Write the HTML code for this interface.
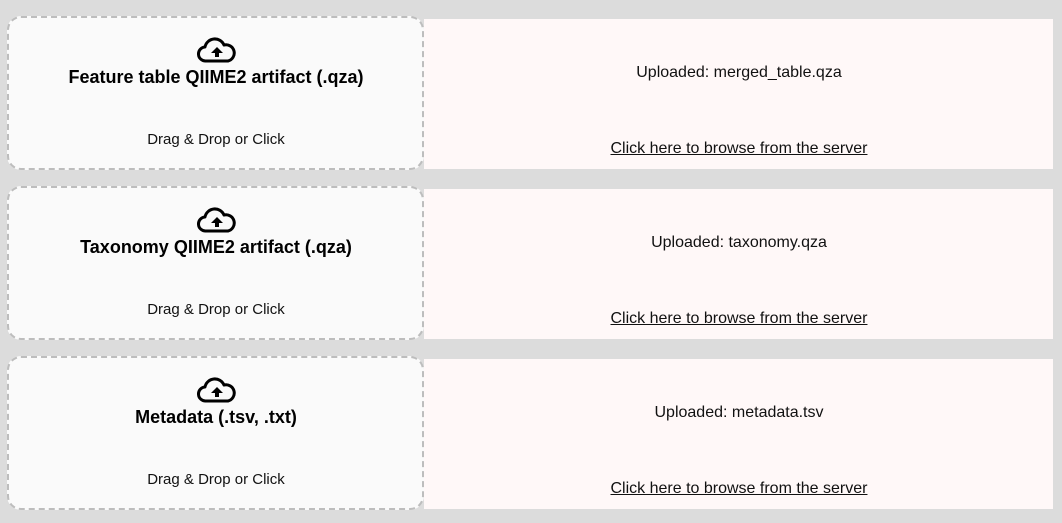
<!DOCTYPE html>
<html><head><style>
body{margin:0;width:1062px;height:523px;background:#dcdcdc;font-family:"Liberation Sans",sans-serif;position:relative;overflow:hidden}
.box{position:absolute;left:7px;width:413px;height:150px;border:2px dashed #bdbdbd;border-radius:14px;background:#fafafa;box-sizing:content-box}
.ic{position:absolute;left:188px;top:18px}
.t{position:absolute;left:1px;right:0;top:49px;text-align:center;font-weight:bold;font-size:18px;color:#000}
.d{position:absolute;left:1px;right:0;top:113px;text-align:center;font-size:15px;color:#111}
.r{position:absolute;left:424px;width:629px;height:150px;background:#fff8f8}
.u{position:absolute;left:1px;right:0;top:45px;text-align:center;font-size:16px;color:#111}
.l{position:absolute;left:1px;right:0;top:121px;text-align:center;font-size:16px;color:#111;text-decoration:underline}
</style></head><body>
<div class="box" style="top:16px"><svg class="ic" width="40" height="28" viewBox="0 0 40 28"><path d="M9 25 A7 7 0 0 1 8 11 A10 10 0 0 1 27 9 A8 8 0 0 1 31 25 Z" fill="none" stroke="#000" stroke-width="3" stroke-linejoin="round"/><path d="M20 11 L26 17 H22 V21 H18 V17 H14 Z" fill="#000"/></svg><div class="t">Feature table QIIME2 artifact (.qza)</div><div class="d">Drag &amp; Drop or Click</div></div>
<div class="r" style="top:19px"><div class="u">Uploaded: merged_table.qza</div><div class="l">Click here to browse from the server</div></div>
<div class="box" style="top:186px"><svg class="ic" width="40" height="28" viewBox="0 0 40 28"><path d="M9 25 A7 7 0 0 1 8 11 A10 10 0 0 1 27 9 A8 8 0 0 1 31 25 Z" fill="none" stroke="#000" stroke-width="3" stroke-linejoin="round"/><path d="M20 11 L26 17 H22 V21 H18 V17 H14 Z" fill="#000"/></svg><div class="t">Taxonomy QIIME2 artifact (.qza)</div><div class="d">Drag &amp; Drop or Click</div></div>
<div class="r" style="top:189px"><div class="u">Uploaded: taxonomy.qza</div><div class="l">Click here to browse from the server</div></div>
<div class="box" style="top:356px"><svg class="ic" width="40" height="28" viewBox="0 0 40 28"><path d="M9 25 A7 7 0 0 1 8 11 A10 10 0 0 1 27 9 A8 8 0 0 1 31 25 Z" fill="none" stroke="#000" stroke-width="3" stroke-linejoin="round"/><path d="M20 11 L26 17 H22 V21 H18 V17 H14 Z" fill="#000"/></svg><div class="t">Metadata (.tsv, .txt)</div><div class="d">Drag &amp; Drop or Click</div></div>
<div class="r" style="top:359px"><div class="u">Uploaded: metadata.tsv</div><div class="l">Click here to browse from the server</div></div>
</body></html>
